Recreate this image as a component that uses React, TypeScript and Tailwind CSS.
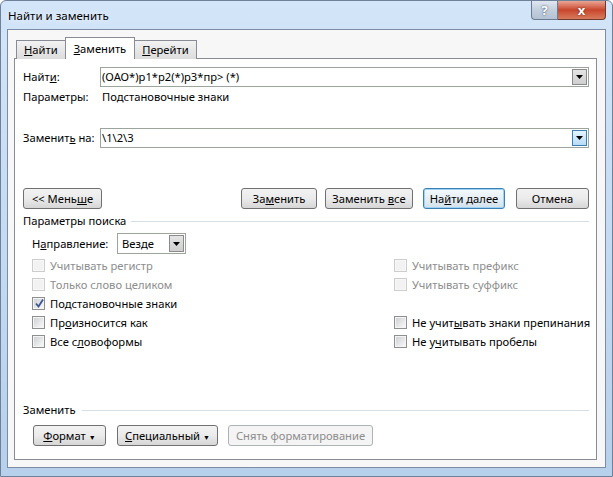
import { ReactNode } from 'react'

function Arrow() {
  return (
    <svg width="7" height="4" viewBox="0 0 7 4">
      <path d="M0 0h7L3.5 4z" fill="#000" />
    </svg>
  )
}

function Combo({ value, active = false }: { value: string; active?: boolean }) {
  return (
    <div className="flex-1 h-[20px] flex items-stretch bg-white border border-[#9ca59c]">
      <div className="flex-1 flex items-center pl-[1px] whitespace-pre">{value}</div>
      <div
        className={`w-[15px] m-[1px] flex items-center justify-center border ${
          active
            ? 'border-[#3c7fb1] bg-gradient-to-b from-[#e5f4fc] to-[#b7dcf5]'
            : 'border-[#8b8b8b] bg-gradient-to-b from-[#e4e4e4] to-[#cfcfcf]'
        }`}
      >
        <Arrow />
      </div>
    </div>
  )
}

interface BtnProps {
  children: ReactNode
  w: string
  primary?: boolean
  disabled?: boolean
  className?: string
}

function Btn({ children, w, primary = false, disabled = false, className = '' }: BtnProps) {
  let look = 'border-[#707070] bg-gradient-to-b from-[#f2f2f2] via-[#ebebeb] to-[#d6d6d6] text-black'
  if (primary) look = 'border-[#3c7fb1] bg-gradient-to-b from-[#f4f9fc] via-[#e6eff5] to-[#d3e1ea] text-black shadow-[inset_0_0_0_1px_#9fd3f5]'
  if (disabled) look = 'border-[#adb2b5] bg-[#f4f4f4] text-[#8d8d8d]'
  return (
    <div className={`${w} h-full flex items-center justify-center rounded-[3px] border ${look} ${className}`}>
      <span className="whitespace-pre">{children}</span>
    </div>
  )
}

function Check({ label, checked = false, disabled = false }: { label: ReactNode; checked?: boolean; disabled?: boolean }) {
  return (
    <div className={`flex items-center h-[19px] ${disabled ? 'text-[#8d8d8d]' : 'text-black'}`}>
      <div
        className={`relative w-[13px] h-[13px] border flex items-center justify-center ${
          disabled ? 'border-[#cdcdcd] bg-[#f7f7f7]' : 'border-[#8e8f8f] bg-[#f4f4f4]'
        }`}
      >
        <div
          className={`w-[9px] h-[9px] ${
            disabled ? 'bg-[#f2f2f2]' : 'bg-gradient-to-br from-[#cfd1d4] to-[#f8f8f8]'
          }`}
        />
        {checked && (
          <svg className="absolute left-[1px] top-[0px]" width="11" height="11" viewBox="0 0 11 11">
            <path d="M2 5.5 L4.5 8.5 L9 1.5" fill="none" stroke="#3a5494" strokeWidth="1.8" />
          </svg>
        )}
      </div>
      <span className="ml-[5px] whitespace-nowrap">{label}</span>
    </div>
  )
}

function GroupTitle({ children, lineStart }: { children: ReactNode; lineStart: string }) {
  return (
    <div className="h-[16px] flex items-center">
      <span className={`${lineStart} whitespace-nowrap`}>{children}</span>
      <div className="flex-1 h-px bg-[#d5dfe5]" />
    </div>
  )
}

export default function App() {
  return (
    <div className="w-[613px] h-[477px] flex flex-col border border-[#6f8099] rounded-t-[6px] bg-gradient-to-b from-[#d3e5f8] via-[#c4dbf3] to-[#b7d0eb] font-['Noto_Sans',sans-serif] text-[11.2px] text-black leading-none overflow-hidden">
      {/* Title bar */}
      <div className="h-[28px] flex items-start justify-between">
        <span className="pl-[7px] pt-[9px] text-[11.5px] [text-shadow:0_0_6px_#ffffff]">Найти и заменить</span>
        <div className="flex mr-[6px]">
          <div className="w-[27px] h-[19px] flex items-center justify-center rounded-bl-[4px] border border-t-0 border-[#6d7b92] bg-gradient-to-b from-[#dfe7f1] via-[#c3cfdd] to-[#b3c2d4] text-white font-bold text-[13px] [text-shadow:0_0_2px_#2a3a55]">
            ?
          </div>
          <div className="w-[48px] h-[19px] flex items-center justify-center rounded-br-[4px] border border-l-0 border-t-0 border-[#6d3a30] bg-gradient-to-b from-[#e8a493] via-[#c8452c] to-[#d77b5d] text-white font-bold text-[13px] [text-shadow:0_0_2px_#5a1a10]">
            x
          </div>
        </div>
      </div>

      {/* Client area */}
      <div className="flex-1 mx-[6px] mb-[8px] flex flex-col border border-[#7d8ca3] bg-[#f7f7f7] pt-[7px] pl-[6px] pr-[8px] pb-[7px]">
        {/* Tabs */}
        <div className="flex items-end h-[22px] pl-[2px] relative z-10 -mb-px">
          <div className="h-[19px] px-[7px] flex items-center border border-b-0 border-[#898c95] bg-gradient-to-b from-[#f2f2f2] to-[#dcdcdc]">
            <span><u>Н</u>айти</span>
          </div>
          <div className="h-[22px] px-[8px] flex items-center border border-b-0 border-[#898c95] bg-white -ml-px">
            <span><u>З</u>аменить</span>
          </div>
          <div className="h-[19px] px-[7px] flex items-center border border-b-0 border-l-0 border-[#898c95] bg-gradient-to-b from-[#f2f2f2] to-[#dcdcdc]">
            <span><u>П</u>ерейти</span>
          </div>
        </div>

        {/* Panel */}
        <div className="flex-1 flex flex-col border border-[#898c95] bg-white pt-[8px] pl-[8px] pr-[7px]">
          <div className="h-[20px] flex items-center">
            <span className="w-[77px]">Найт<u>и</u>:</span>
            <Combo value="(ОАО*)р1*р2(*)р3*пр> (*)" />
          </div>
          <div className="h-[16px] mt-[2px] flex items-center">
            <span className="w-[79px]">Параметры:</span>
            <span>Подстановочные знаки</span>
          </div>
          <div className="h-[20px] mt-[23px] flex items-center">
            <span className="w-[77px] whitespace-pre">Заменит<u>ь</u> на:</span>
            <Combo value="\1\2\3" active />
          </div>

          {/* Buttons */}
          <div className="h-[21px] mt-[40px] flex">
            <Btn w="w-[79px]">&lt;&lt; Мень<u>ш</u>е</Btn>
            <div className="flex-1" />
            <Btn w="w-[76px]">За<u>м</u>енить</Btn>
            <Btn w="w-[88px]" className="ml-[8px]">Заменить <u>в</u>се</Btn>
            <Btn w="w-[82px]" className="ml-[10px]" primary>На<u>й</u>ти далее</Btn>
            <Btn w="w-[73px]" className="ml-[11px]">Отмена</Btn>
          </div>

          <div className="mt-[4px]">
            <GroupTitle lineStart="mr-[5px]">Параметры поиска</GroupTitle>
          </div>

          <div className="h-[21px] mt-[4px] pl-[9px] flex items-center">
            <span className="w-[85px]">Н<u>а</u>правление:</span>
            <div className="w-[69px] h-[21px] flex items-stretch bg-white border border-[#9ca59c]">
              <div className="flex-1 flex items-center pl-[4px]">Везде</div>
              <div className="w-[15px] m-[1px] flex items-center justify-center border border-[#8b8b8b] bg-gradient-to-b from-[#e4e4e4] to-[#cfcfcf]">
                <Arrow />
              </div>
            </div>
          </div>

          <div className="mt-[2px] pl-[9px] grid grid-cols-[362px_1fr]">
            <Check label="Учитывать регистр" disabled />
            <Check label="Учитывать префикс" disabled />
            <Check label="Только слово целиком" disabled />
            <Check label="Учитывать суффикс" disabled />
            <Check label={<>По<u>д</u>становочные знаки</>} checked />
            <div />
            <Check label={<>Пр<u>о</u>износится как</>} />
            <Check label={<>Не учит<u>ы</u>вать знаки препинания</>} />
            <Check label={<>Все с<u>л</u>овоформы</>} />
            <Check label={<>Не у<u>ч</u>итывать пробелы</>} />
          </div>

          <div className="mt-[51px]">
            <GroupTitle lineStart="mr-[6px]">Заменить</GroupTitle>
          </div>

          <div className="h-[21px] mt-[7px] pl-[10px] flex">
            <Btn w="w-[73px]"><u>Ф</u>ормат<span className="ml-[3px] text-[7px]">▼</span></Btn>
            <Btn w="w-[101px]" className="ml-[11px]"><u>С</u>пециальный<span className="ml-[3px] text-[7px]">▼</span></Btn>
            <Btn w="w-[145px]" className="ml-[10px]" disabled>Снять форматирование</Btn>
          </div>
        </div>
      </div>
    </div>
  )
}
